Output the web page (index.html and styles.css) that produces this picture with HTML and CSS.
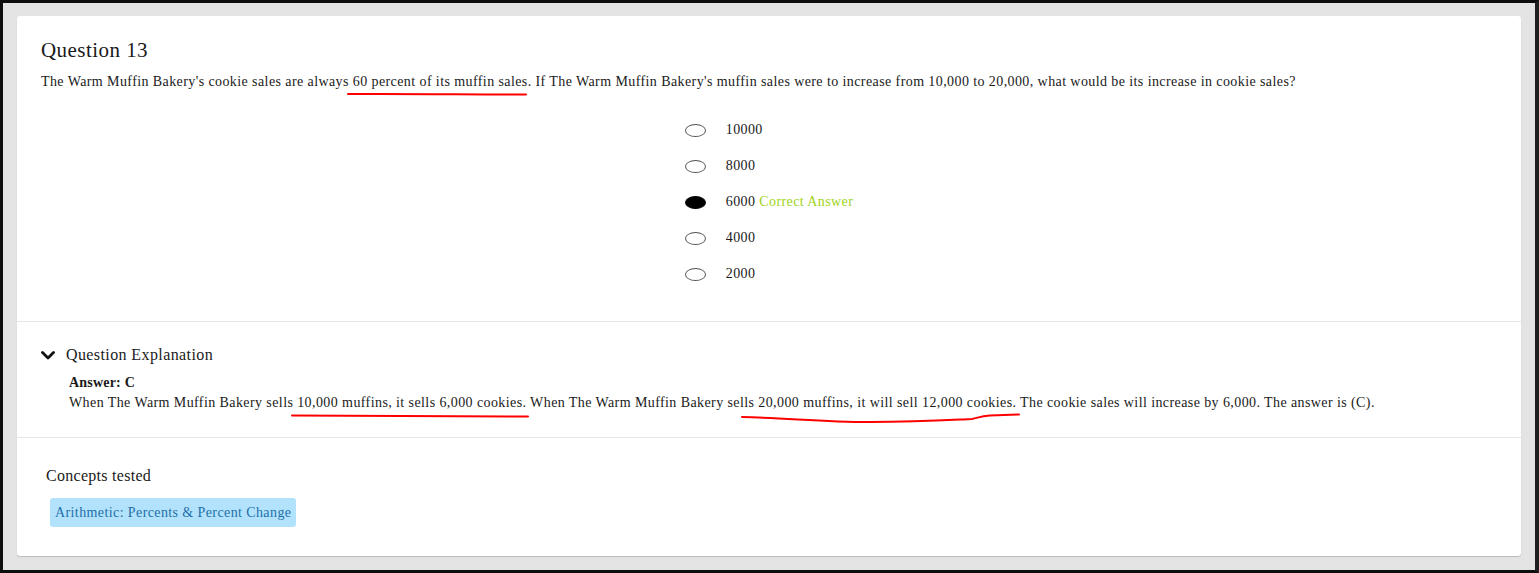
FILE: index.html
```html
<!DOCTYPE html>
<html lang="en">
<head>
<meta charset="utf-8">
<title>Question 13</title>
<link rel="stylesheet" href="styles.css">
</head>
<body>
<div class="frame">
  <div class="card">
    <section class="question">
      <h2 class="q-title">Question 13</h2>
      <p class="q-text">The Warm Muffin Bakery's cookie sales are always 60 percent of its muffin sales. If The Warm Muffin Bakery's muffin sales were to increase from 10,000 to 20,000, what would be its increase in cookie sales?</p>
      <div class="options-wrap">
        <ul class="options">
          <li class="option"><span class="radio"></span><span class="opt-label">10000</span></li>
          <li class="option"><span class="radio"></span><span class="opt-label">8000</span></li>
          <li class="option"><span class="radio radio-on"></span><span class="opt-label">6000 <span class="correct">Correct Answer</span></span></li>
          <li class="option"><span class="radio"></span><span class="opt-label">4000</span></li>
          <li class="option"><span class="radio"></span><span class="opt-label">2000</span></li>
        </ul>
      </div>
    </section>
    <section class="explanation">
      <div class="exp-head">
        <svg class="chevron" width="14" height="9" viewBox="0 0 14 9"><path d="M1.5 1.5 L7 7 L12.5 1.5" fill="none" stroke="#111" stroke-width="2.8" stroke-linecap="round" stroke-linejoin="round"/></svg>
        <span class="exp-title">Question Explanation</span>
      </div>
      <div class="exp-body">
        <div class="answer">Answer: C</div>
        <div class="exp-text">When The Warm Muffin Bakery sells 10,000 muffins, it sells 6,000 cookies. When The Warm Muffin Bakery sells 20,000 muffins, it will sell 12,000 cookies. The cookie sales will increase by 6,000. The answer is (C).</div>
      </div>
    </section>
    <section class="concepts">
      <div class="concepts-title">Concepts tested</div>
      <span class="badge">Arithmetic: Percents &amp; Percent Change</span>
    </section>
  </div>
  <svg class="annotations" width="1539" height="573" viewBox="0 0 1539 573">
    <path d="M348 94 C 400 93.5, 470 94.5, 526 94.5" fill="none" stroke="#f00" stroke-width="2" stroke-linecap="round"/>
    <path d="M292 415.5 C 380 415.5, 460 416, 528 416.5" fill="none" stroke="#f00" stroke-width="2" stroke-linecap="round"/>
    <path d="M742 417 C 790 418, 820 422, 870 422 S 950 420, 972 419 C 978 418, 980 416, 990 415.5 L 1019 414.5" fill="none" stroke="#f00" stroke-width="2" stroke-linecap="round"/>
  </svg>
</div>
</body>
</html>
```

FILE: styles.css
```css
* { box-sizing: border-box; }
html, body { margin: 0; padding: 0; }
body {
  font-family: "Liberation Serif", "Times New Roman", serif;
  color: #1a1a1a;
  background: #e4e4e4;
}
.frame {
  position: relative;
  width: 1539px;
  height: 573px;
  border: 3px solid #0d0d0d;
  border-right: 4px solid #1f1f1f;
  background: #e4e4e4;
  padding: 13px 14px 14px 14px;
}
.card {
  background: #fff;
  border-radius: 3px;
  box-shadow: 0 1px 1px rgba(0,0,0,0.18);
  height: 540px;
  display: flex;
  flex-direction: column;
}
.question {
  padding: 22px 24px 29px 24px;
  border-bottom: 1px solid #e6e6e6;
}
.q-title {
  margin: 0;
  font-weight: normal;
  font-size: 21px;
  line-height: 24px;
  letter-spacing: 0.45px;
}
.q-text {
  margin: 10px 0 0 0;
  font-size: 14px;
  line-height: 20px;
  letter-spacing: 0.41px;
}
.options-wrap {
  margin-top: 20px;
  text-align: center;
}
.options {
  display: inline-block;
  list-style: none;
  margin: 0;
  padding: 0;
  text-align: left;
}
.option {
  display: flex;
  align-items: center;
  height: 36px;
  font-size: 14px;
  letter-spacing: 0.41px;
}
.radio {
  width: 21px;
  height: 13px;
  border: 1px solid #555;
  border-radius: 50%;
  background: #fff;
  margin-right: 20px;
  flex: none;
}
.radio-on {
  background: #000;
  border-color: #000;
}
.correct { color: #9ed418; }
.explanation {
  padding: 22px 24px 24px 24px;
  border-bottom: 1px solid #e6e6e6;
}
.exp-head {
  display: flex;
  align-items: center;
  height: 22px;
}
.chevron { margin-right: 11px; margin-top: 1px; }
.exp-title {
  font-size: 16px;
  line-height: 22px;
  letter-spacing: 0.4px;
}
.exp-body {
  padding-left: 28px;
  margin-top: 7px;
  font-size: 14px;
  line-height: 20px;
  letter-spacing: 0.41px;
}
.answer { font-weight: bold; letter-spacing: 0.2px; }
.concepts {
  padding: 27px 29px 0 29px;
  flex: 1;
}
.concepts-title {
  font-size: 16px;
  line-height: 22px;
  letter-spacing: 0.28px;
}
.badge {
  display: inline-block;
  margin: 11px 0 0 4px;
  background: #b3e3fc;
  color: #1f6fa8;
  font-size: 14px;
  line-height: 29px;
  padding: 0 5px;
  border-radius: 3px;
  letter-spacing: 0.4px;
}
.annotations {
  position: absolute;
  left: -3px;
  top: -3px;
  pointer-events: none;
}
```
